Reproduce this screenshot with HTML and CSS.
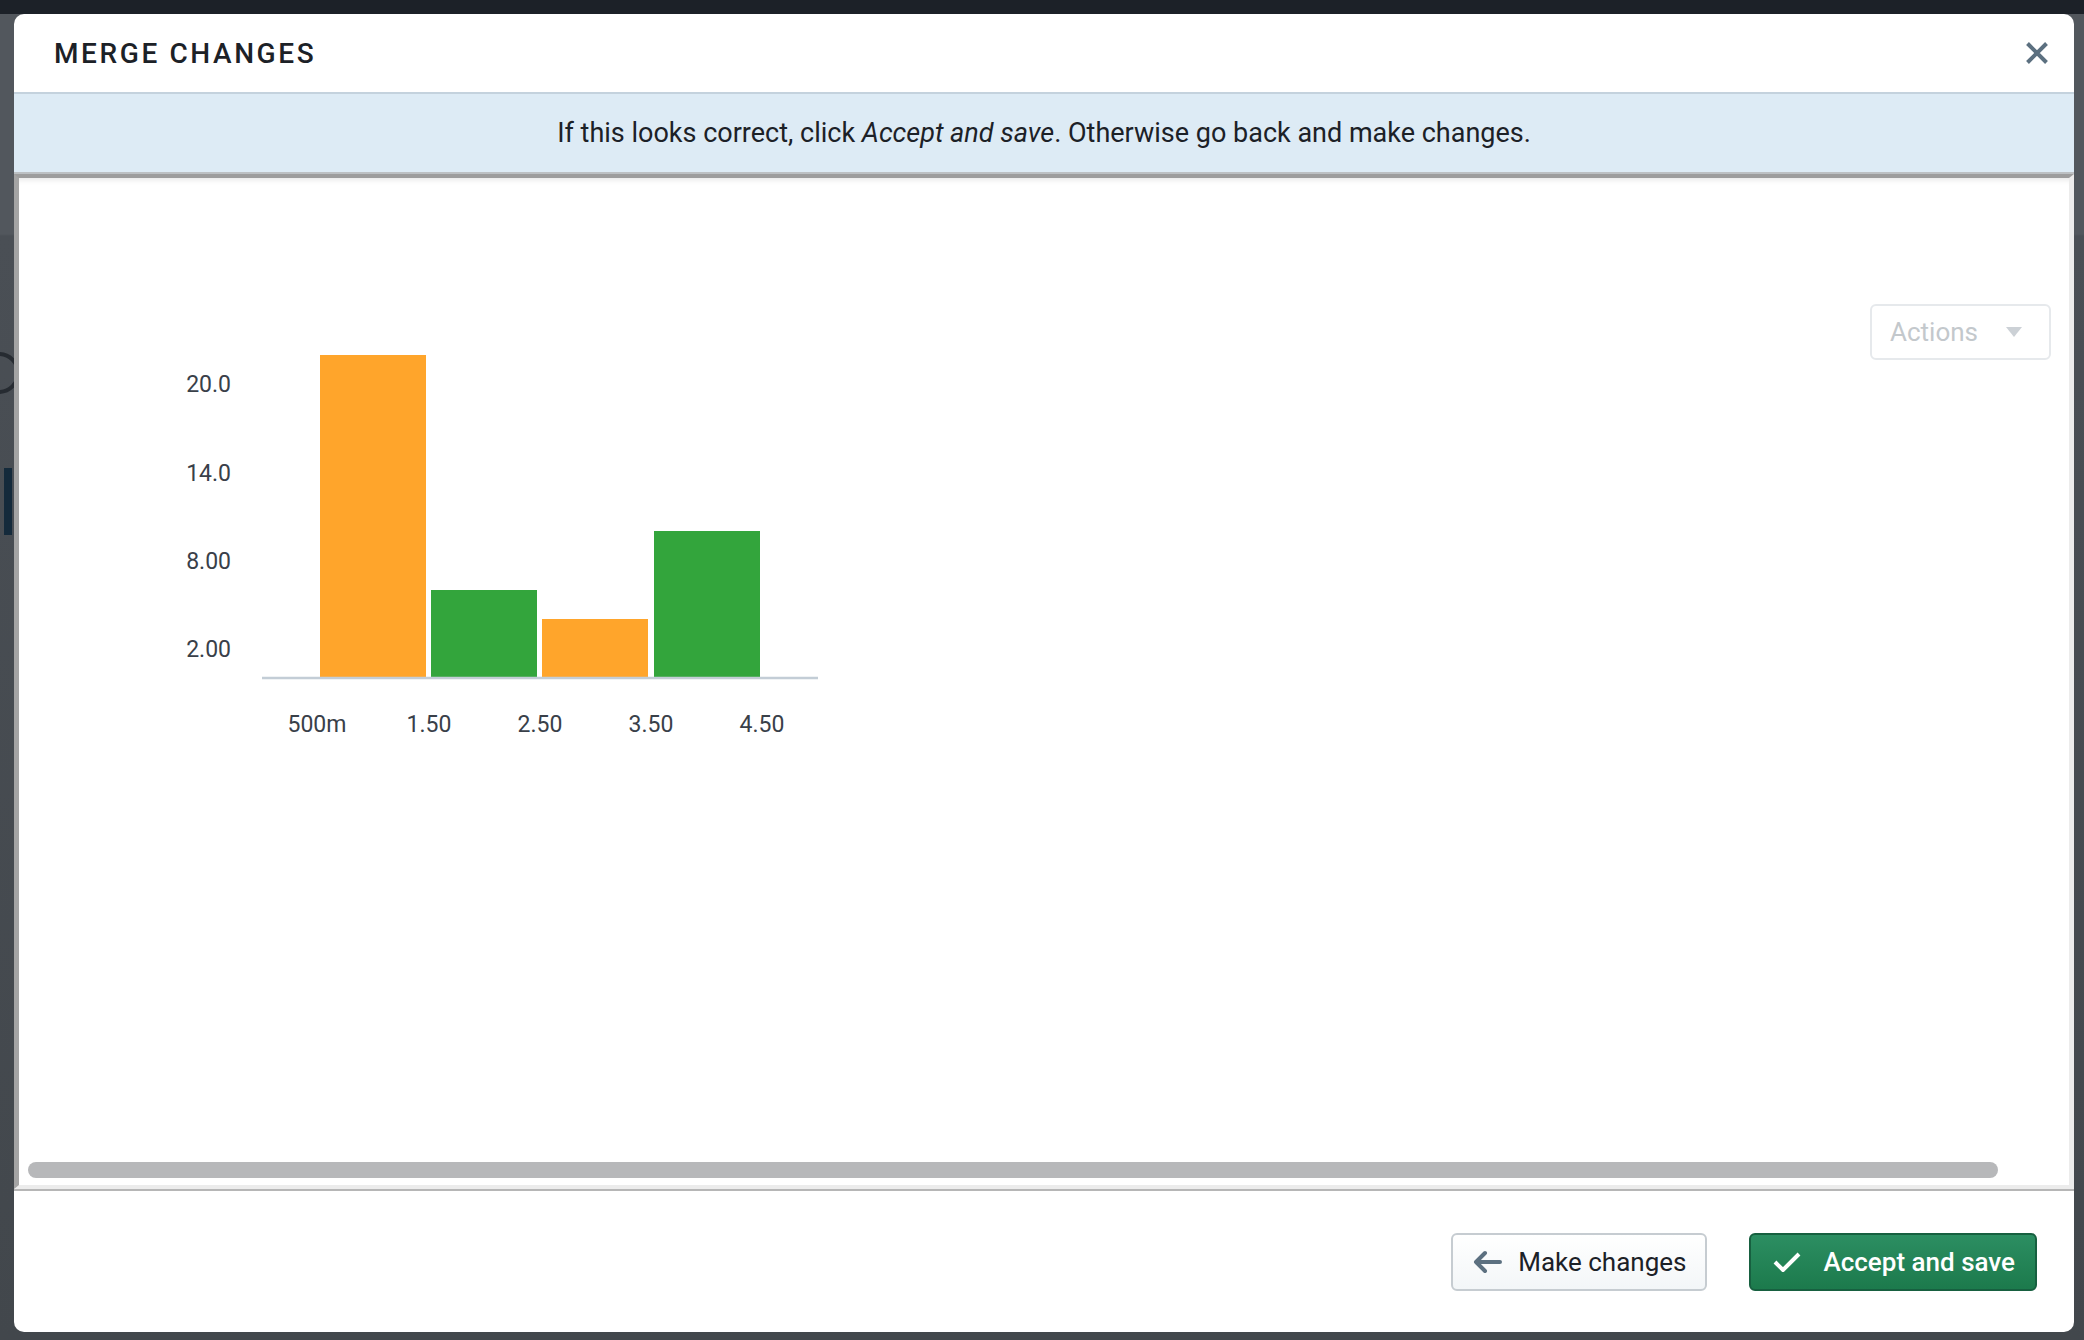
FILE: index.html
```html
<!DOCTYPE html>
<html lang="en">
<head>
    <meta charset="UTF-8">
    <meta name="viewport" content="width=device-width, initial-scale=1.0">
    <title>Merge changes</title>
    <link rel="stylesheet" href="styles.css">
</head>
<body>
    <div class="page">
        <!-- bits of the app showing behind the overlay -->
        <div class="bg-ring"></div>
        <div class="bg-tab"></div>

        <div class="dialog">
            <div class="dialog-header">
                <h1 class="dialog-title">MERGE CHANGES</h1>
                <button class="close-btn" aria-label="Close">
                    <svg width="24" height="22" viewBox="0 0 24 22">
                        <path d="M2.5 1.5 L21.5 20.5 M21.5 1.5 L2.5 20.5" stroke="#5c7080" stroke-width="4" fill="none"/>
                    </svg>
                </button>
            </div>

            <div class="notice">If this looks correct, click <em>Accept and save</em>. Otherwise go back and make changes.</div>

            <div class="preview">
                <div class="preview-body">
                    <!-- histogram, coords are relative to the svg box -->
                    <svg class="histogram" width="660" height="420" viewBox="0 0 660 420">
                        <rect x="150" y="15" width="106" height="322" fill="#ffa52b"/>
                        <rect x="261" y="250" width="106" height="87" fill="#33a53c"/>
                        <rect x="372" y="279" width="106" height="58" fill="#ffa52b"/>
                        <rect x="484" y="191" width="106" height="146" fill="#33a53c"/>
                        <line x1="92" y1="338" x2="648" y2="338" stroke="#c3cdd6" stroke-width="2.5"/>

                        <g class="axis-y">
                            <text x="61" y="52">20.0</text>
                            <text x="61" y="141">14.0</text>
                            <text x="61" y="229">8.00</text>
                            <text x="61" y="317">2.00</text>
                        </g>
                        <g class="axis-x">
                            <text x="147" y="392">500m</text>
                            <text x="259" y="392">1.50</text>
                            <text x="370" y="392">2.50</text>
                            <text x="481" y="392">3.50</text>
                            <text x="592" y="392">4.50</text>
                        </g>
                    </svg>

                    <div class="actions-btn">Actions <span class="caret"></span></div>
                </div>
                <div class="scroll-thumb"></div>
            </div>

            <div class="dialog-footer">
                <button class="btn">
                    <svg width="30" height="24" viewBox="0 0 30 24">
                        <path d="M28 12 H4 M13 3 L4 12 L13 21" stroke="#5c7080" stroke-width="4" fill="none" stroke-linecap="round" stroke-linejoin="round"/>
                    </svg>
                    Make changes
                </button>
                <button class="btn btn-primary">
                    <svg width="28" height="20" viewBox="0 0 28 20">
                        <path d="M2 10 L10 18 L26 2" stroke="#fff" stroke-width="4" fill="none"/>
                    </svg>
                    Accept and save
                </button>
            </div>
        </div>
    </div>
</body>
</html>
```

FILE: styles.css
```css
body {
    margin: 0;
    font-family: Roboto, "Liberation Sans", sans-serif;
    color: #1c2127;
    overflow: hidden;
}
.page {
    position: relative;
    height: 1340px;
    box-sizing: border-box;
    padding: 14px 10px 8px 14px;
    background: linear-gradient(#1c2128 0, #1c2128 14px, #52575d 14px, #52575d 234px, #4a4f55 236px, #42474c 100%);
}
.bg-ring {
    position: absolute;
    left: -22px;
    top: 352px;
    width: 34px;
    height: 34px;
    border: 4px solid #262b31;
    border-radius: 50%;
}
.bg-tab {
    position: absolute;
    left: 4px;
    top: 468px;
    width: 8px;
    height: 67px;
    background: #142a3b;
}
.dialog {
    position: relative;
    width: 2060px;
    height: 1318px;
    background: #fff;
    border-radius: 10px;
    overflow: hidden;
    display: flex;
    flex-direction: column;
}
.dialog-header {
    height: 80px;
    box-sizing: border-box;
    border-bottom: 2px solid #c4d2dd;
    padding: 0 25px 0 40px;
    display: flex;
    align-items: center;
    justify-content: space-between;
}
.dialog-title {
    margin: 0;
    font-size: 28px;
    font-weight: 500;
    letter-spacing: 2.6px;
}
.close-btn {
    background: none;
    border: none;
    padding: 0;
    display: flex;
    cursor: pointer;
}
.notice {
    height: 80px;
    box-sizing: border-box;
    background: #ddebf5;
    border-bottom: 2px solid #bcc0c3;
    text-align: center;
    line-height: 78px;
    font-size: 27px;
}
.preview {
    flex: 1;
    display: flex;
    flex-direction: column;
    border-style: solid;
    border-width: 4px 5px 4px 5px;
    border-color: #9d9d9d #ececec #ececec #a4a4a4;
    box-shadow: inset 0 7px 6px -6px rgba(0, 0, 0, 0.12);
}
.preview-body {
    flex: 1;
    display: flex;
    justify-content: space-between;
    align-items: flex-start;
    padding: 126px 18px 0 151px;
}
.histogram {
    margin-top: 36px;
    font-family: Roboto, "Liberation Sans", sans-serif;
    font-size: 23px;
}
.histogram text {
    fill: #394049;
}
.axis-y text {
    text-anchor: end;
}
.axis-x text {
    text-anchor: middle;
}
.actions-btn {
    width: 181px;
    height: 56px;
    box-sizing: border-box;
    border: 2px solid #e6e9ec;
    border-radius: 6px;
    padding: 0 27px 0 18px;
    display: flex;
    align-items: center;
    justify-content: space-between;
    font-size: 26px;
    color: #c3c8cc;
}
.caret {
    width: 0;
    height: 0;
    border-left: 8px solid transparent;
    border-right: 8px solid transparent;
    border-top: 10px solid #ccd1d6;
}
.scroll-thumb {
    width: 1970px;
    height: 16px;
    margin: 0 0 7px 9px;
    border-radius: 8px;
    background: #b7b8ba;
}
.dialog-footer {
    height: 143px;
    box-sizing: border-box;
    border-top: 2px solid #b6b6b6;
    padding: 0 37px 0 0;
    display: flex;
    justify-content: flex-end;
    align-items: center;
    gap: 42px;
}
.btn {
    height: 58px;
    box-sizing: border-box;
    border-radius: 6px;
    border: 2px solid #c6ccd1;
    background: linear-gradient(#ffffff, #f3f6f8);
    color: #1c2127;
    font-family: Roboto, "Liberation Sans", sans-serif;
    font-size: 26px;
    display: inline-flex;
    align-items: center;
    gap: 16px;
    padding: 0 19px 0 19px;
    cursor: pointer;
}
.btn-primary {
    background: linear-gradient(#2c8e62, #1c7a4c);
    border-color: #176040;
    color: #fff;
    font-weight: 500;
    gap: 22px;
    padding: 0 20px 0 22px;
}
```
